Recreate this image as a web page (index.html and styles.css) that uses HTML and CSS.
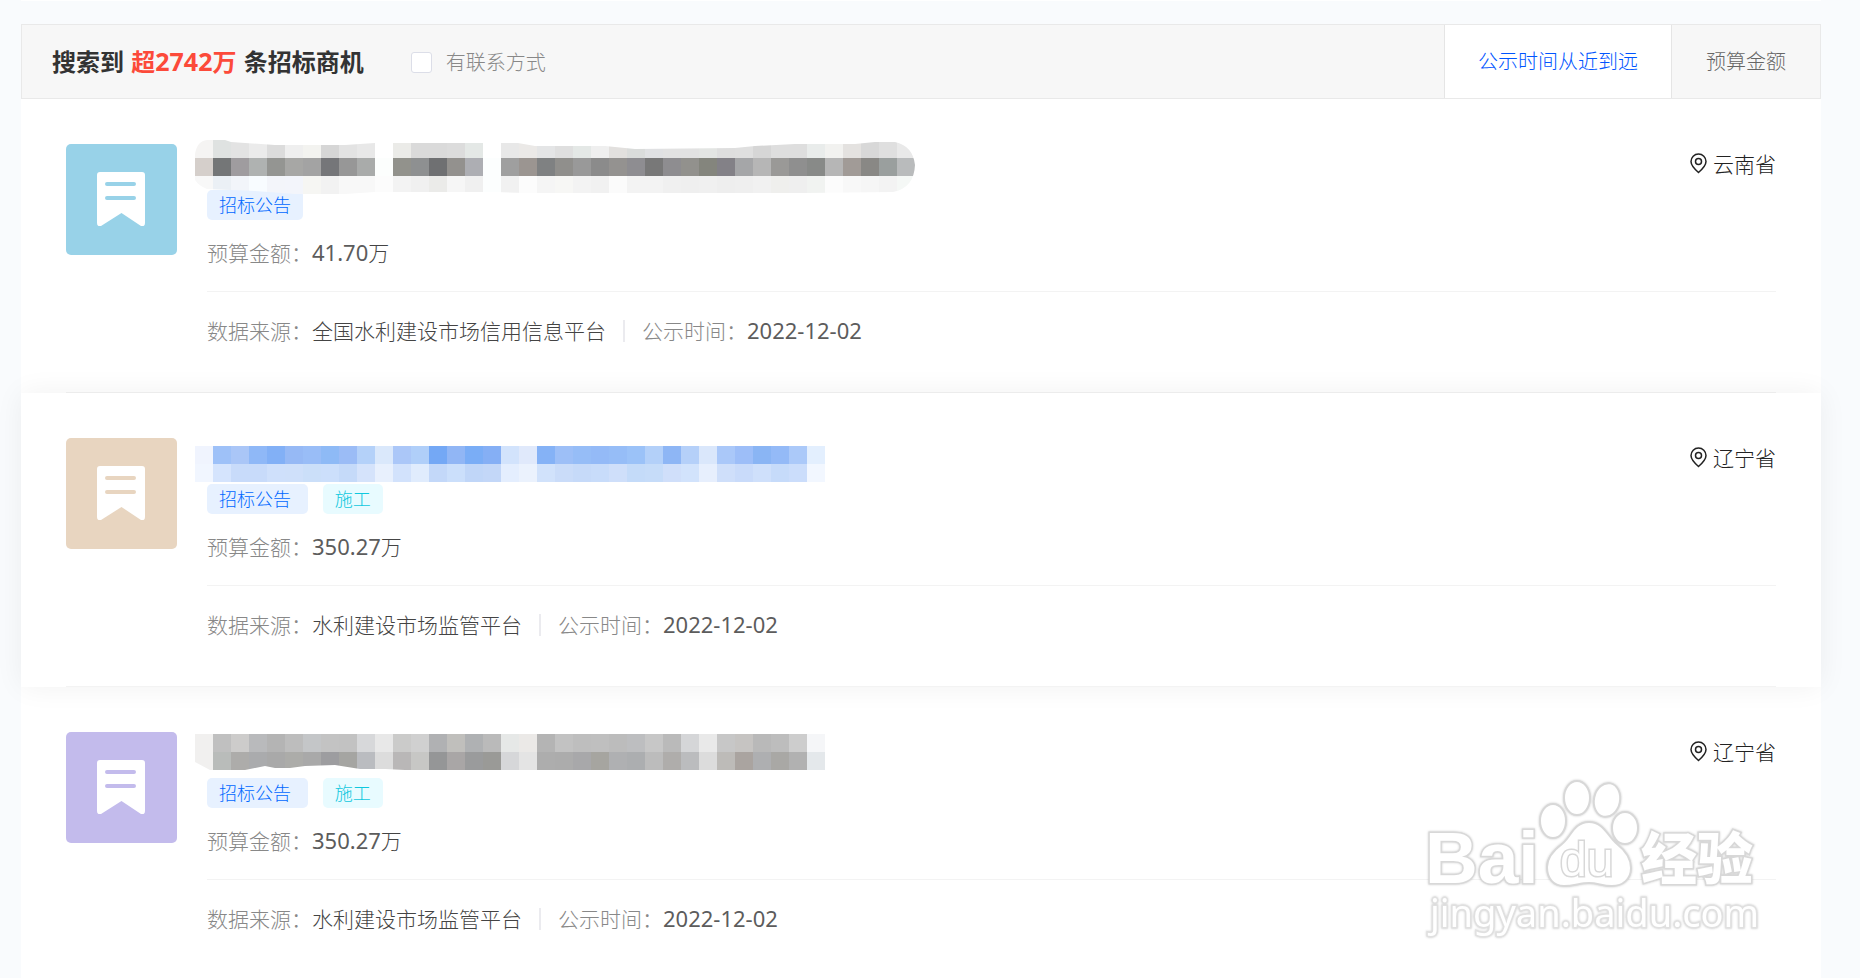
FILE: index.html
```html
<!DOCTYPE html>
<html lang="zh-CN">
<head>
	<meta charset="utf-8">
	<title>招标商机</title>
	<link rel="stylesheet" href="styles.css">
</head>
<body>
	<!-- shared icons -->
	<svg class="sprite" aria-hidden="true">
		<symbol id="icon-bookmark" viewBox="0 0 48 54">
			<path fill="#fff" d="M3 0h42q3 0 3 3v48q0 4-4 3L24.500 41 4 54q-4 1-4-3V3q0-3 3-3z"/>
			<path fill="none" stroke="currentColor" stroke-width="4" stroke-linecap="round" d="M10 12h27M10 26h27"/>
		</symbol>
		<symbol id="icon-pin" viewBox="0 0 18 21">
			<path fill="none" stroke="currentColor" stroke-width="1.500" d="M8.500 19.500C4.500 16 1 12.500 1 8.500a7.500 7.500 0 0 1 15 0c0 4-3.500 7.500-7.500 11z"/>
			<circle cx="8.500" cy="8.500" r="3" fill="none" stroke="currentColor" stroke-width="1.500"/>
		</symbol>
	</svg>

	<div class="container">
		<div class="toolbar">
			<h1 class="result-title">搜索到 <em>超<span class="count">2742</span>万</em> 条招标商机</h1>
			<label class="filter"><input type="checkbox" class="filter-box" name="contact">有联系方式</label>
			<div class="sort">
				<button type="button" class="sort-btn active">公示时间从近到远</button>
				<button type="button" class="sort-btn">预算金额</button>
			</div>
		</div>

		<div class="list">
			<div class="item">
				<div class="item-inner">
					<div class="thumb blue"><svg><use href="#icon-bookmark"/></svg></div>
					<div class="detail">
						<div class="title-row">
							<svg class="mosaic mosaic-1" id="mosaic-1"></svg>
							<span class="place"><svg><use href="#icon-pin"/></svg>云南省</span>
						</div>
						<div class="tags"><span class="tag">招标公告</span></div>
						<p class="budget"><span class="name">预算金额：</span><span class="num">41.70</span>万</p>
						<p class="source"><span><span class="name">数据来源：</span>全国水利建设市场信用信息平台</span><i class="sep"></i><span><span class="name">公示时间：</span><span class="num">2022-12-02</span></span></p>
					</div>
				</div>
			</div>

			<div class="item hover">
				<div class="item-inner">
					<div class="thumb sand"><svg><use href="#icon-bookmark"/></svg></div>
					<div class="detail">
						<div class="title-row">
							<svg class="mosaic mosaic-2" id="mosaic-2"></svg>
							<span class="place"><svg><use href="#icon-pin"/></svg>辽宁省</span>
						</div>
						<div class="tags"><span class="tag">招标公告 </span><span class="tag cyan">施工</span></div>
						<p class="budget"><span class="name">预算金额：</span><span class="num">350.27</span>万</p>
						<p class="source"><span><span class="name">数据来源：</span>水利建设市场监管平台</span><i class="sep"></i><span><span class="name">公示时间：</span><span class="num">2022-12-02</span></span></p>
					</div>
				</div>
			</div>

			<div class="item">
				<div class="item-inner">
					<div class="thumb purple"><svg><use href="#icon-bookmark"/></svg></div>
					<div class="detail">
						<div class="title-row">
							<svg class="mosaic mosaic-3" id="mosaic-3"></svg>
							<span class="place"><svg><use href="#icon-pin"/></svg>辽宁省</span>
						</div>
						<div class="tags"><span class="tag">招标公告 </span><span class="tag cyan">施工</span></div>
						<p class="budget"><span class="name">预算金额：</span><span class="num">350.27</span>万</p>
						<p class="source"><span><span class="name">数据来源：</span>水利建设市场监管平台</span><i class="sep"></i><span><span class="name">公示时间：</span><span class="num">2022-12-02</span></span></p>
					</div>
				</div>
			</div>
		</div>

		<svg class="watermark" viewBox="0 0 350 180">
			<text class="wm-bai" x="5" y="112">Bai</text>
			<ellipse cx="133" cy="50" rx="13" ry="17"/>
			<ellipse cx="157" cy="27" rx="13" ry="17"/>
			<ellipse cx="187" cy="29" rx="13" ry="17" transform="rotate(12 187 29)"/>
			<ellipse cx="205" cy="57" rx="13" ry="16"/>
			<path d="M169 51C184 51 188 66 197 73C206 80 211 87 211 97C211 108 203 115 192 115C182 115 178 112 169 112C160 112 154 115 144 115C133 115 127 107 127 96C127 86 134 79 142 73C151 66 154 51 169 51z"/>
			<text class="wm-du" x="140" y="105">du</text>
			<text class="wm-cn" x="221" y="108">经验</text>
			<text class="wm-url" x="10" y="156">jingyan.baidu.com</text>
		</svg>
	</div>

	<script src="mosaic.js"></script>
</body>
</html>
```
FILE: styles.css
```css
* {
	box-sizing: border-box;
}
body {
	margin: 0;
	overflow-x: hidden;
	background-color: #f9fbfd;
	color: #444;
	font-family: "Noto Sans", "Noto Sans CJK SC", sans-serif;
	font-size: 21px;
	font-weight: 300;
	line-height: 30px;
}
h1, p {
	margin: 0;
}
.sprite {
	display: none;
}
.container {
	position: relative;
	margin: 0 39px 0 21px;
	border-top: 1px solid #fff;
	padding-top: 23px;
}

/* toolbar */
.toolbar {
	display: flex;
	align-items: stretch;
	height: 75px;
	padding-left: 30px;
	background-color: #f7f7f7;
	border: 1px solid #e9e9e9;
}
.result-title {
	align-self: center;
	color: #333;
	font-size: 24px;
	font-weight: bold;
	line-height: 36px;
}
.result-title em {
	margin: 0 1px;
	color: #fc4a3a;
	font-style: normal;
}
.count {
	font-size: 25px;
}
.filter {
	display: flex;
	align-items: center;
	gap: 14px;
	margin-left: 47px;
	padding-top: 2px;
	color: #888;
	font-size: 20px;
}
.filter-box {
	appearance: none;
	width: 21px;
	height: 21px;
	margin: 0;
	background-color: #fff;
	border: 1px solid #dcdee8;
	border-radius: 3px;
}
.sort {
	display: flex;
	margin-left: auto;
}
.sort-btn {
	padding: 0 34px;
	background: none;
	border: 0;
	border-left: 1px solid #e5e5e5;
	color: #666;
	font: inherit;
	font-size: 20px;
	cursor: pointer;
}
.sort-btn.active {
	padding: 0 33px;
	background-color: #fff;
	color: #0055ff;
}

/* list */
.list {
	background-color: #fff;
}
.item {
	padding: 45px 45px 0;
}
.item.hover {
	position: relative;
	background-color: #fff;
	box-shadow: 0 0 27px rgba(0, 0, 0, 0.06);
}
.item-inner {
	display: flex;
	gap: 30px;
	padding-bottom: 46px;
	border-bottom: 1px solid #f3f3f3;
}
.thumb {
	width: 111px;
	height: 111px;
	padding: 28px 31px;
	border-radius: 5px;
}
.thumb svg {
	display: block;
	width: 48px;
	height: 54px;
}
.thumb.blue {
	background-color: #98d2e8;
	color: #98d2e8;
}
.thumb.sand {
	background-color: #e8d5c0;
	color: #e8d5c0;
}
.thumb.purple {
	background-color: #c3bbec;
	color: #c3bbec;
}
.detail {
	flex: 1;
}
.title-row {
	position: relative;
	display: flex;
	justify-content: flex-end;
	height: 46px;
	padding-top: 5px;
}
.place {
	display: flex;
	align-items: flex-start;
	gap: 5px;
	color: #222;
}
.place svg {
	width: 18px;
	height: 21px;
	margin-top: 4px;
}
.tags {
	display: flex;
	gap: 15px;
}
.tag {
	height: 30px;
	padding: 0 12px;
	background-color: #e7f1ff;
	border-radius: 5px;
	color: #0068ff;
	font-size: 18px;
	white-space: pre;
}
.tag.cyan {
	background-color: #e8fbff;
	color: #10c8de;
}
.budget {
	padding: 17px 0 23px;
	border-bottom: 1px solid #f3f3f3;
}
.source {
	display: flex;
	align-items: center;
	gap: 17px;
	padding-top: 23px;
}
.name {
	color: #888;
}
.num {
	color: #5c5c5c;
	font-size: 22px;
	font-weight: 400;
}
.sep {
	width: 2px;
	height: 22px;
	background-color: #ebebef;
}

/* pixelated titles, laid over the rows */
.mosaic {
	position: absolute;
	left: -12px;
	z-index: 1;
}
.mosaic-1 {
	top: -4px;
	clip-path: path("M0 14Q2 1 12 0L30 0L36 2L80 5L150 5L180 3L323 3L340 6L410 6L440 9L540 8L560 6L600 4L660 4L680 2L700 2Q718 6 720 25Q719 48 698 52L610 53L330 53L300 52L180 52L150 54L100 54L60 51L12 49Q4 46 0 40z");
}
.mosaic-2 {
	top: 8px;
}
.mosaic-3 {
	top: 2px;
	clip-path: path("M0 0H630V36H210L190 35L165 35L140 31L110 32L95 34L80 34L70 32L50 36L15 36L0 28z");
}

.watermark {
	position: absolute;
	right: 51px;
	top: 770px;
	z-index: 2;
	width: 350px;
	height: 180px;
	fill: #fff;
	stroke: #d8d8d8;
	stroke-width: 2;
	filter: drop-shadow(0 0 1px rgba(0, 0, 0, 0.2));
}
.watermark text {
	paint-order: stroke;
	stroke-width: 3;
}
.wm-bai {
	font: bold 73px "Liberation Sans", sans-serif;
}
.wm-du {
	font: 48px "Liberation Sans", sans-serif;
}
.wm-cn {
	font: 900 56px "Noto Sans CJK SC", sans-serif;
}
.wm-url {
	font: 38px "Noto Sans", sans-serif;
	stroke: #e0e0e0;
}
```
FILE: mosaic.js
```js
// Cell colours of each blurred title, row by row. "-" is an empty cell
var mosaics = {
	"mosaic-1": [
		"f5f4f3 dfe2e1 e3e3e3 ebebeb dcdcdc efefef f3f3f0 d6d6d6 e3e3e3 e8e8e8 - ebebe8 dadada dadada dcdcdc e4e8e6 - e8e8e8 ebe9e7 e4e5e6 dfdfdf e4e8e6 efefef e2e0de dadcdb e0e1e3 e2e2e2 e2e2e2 e3e5e3 dedede dfdfdf d6d6d6 dedede dedede e9eceb f2f2f0 e4e2e0 d8d8d8 dfdfdf e9e9e9",
		"d5cfcb 747677 9f9c9f afb2b1 949592 a7a7a5 a3a3a3 757679 979797 a9abaa fcfefd 92928c 8e9091 6f7072 93918e adaeb3 fcfefe 9f9f9f 9b9591 7f8182 908f8c 999999 8b8b8b 949290 8e8d91 787878 8e8d90 92918d 84857d 838187 a5a6a8 b6b6b6 9a9997 8f8f8f 888a88 b6b6b6 a19b97 898885 9a9f9e b9bbbc",
		"f8f8f8 ebf0f5 f2f5fa f8fcff f3f5fa f3f5fb f6f6f3 f2f2f2 f8f8f8 f8f8f8 fcfcfc f3f3f3 f0f0f0 ebebe9 f6f6f6 f0f0f0 fcfefe f1f1f1 fcfcfc f5f5f5 f7f7f5 f3f3f3 f1f1f1 fbfbfb f3f3f3 f3f3f3 f0f0f0 efefef f0f0f0 eeeeee efefef f1f1f1 efefed efefef f1f3f1 fcfcfc f8f8f8 f6f6f6 f3f3f3 f5f8f6"
	],
	"mosaic-2": [
		"f0f4fe 9ec1f8 aac6f7 8fb8f7 82b0f6 96b9f5 99bdf7 8ebaf6 9bbcf6 b4d1f9 dae8fb abc7f8 b0cff9 74a8f5 91b6f5 7aadf6 85aff5 d2e3fc e0e9fb 85b2f6 9dbff7 96bdf7 94baf7 96bdf7 9bc2f8 b3d0f9 8eb6f5 b5d0f9 dae7fb aac8f9 9dbef8 8ab5f4 94baf7 abc9f9 e3effe",
		"f1f6ff d5e4fd c8dbfa c8dbfa cfe0fb cfe0fa cbdff9 ccdffb c5daf9 d5e3fb e8f0fd d2e2fc e0ecfd c3d8f9 cbdffb c0d6f8 c3d7f8 e4eefe ebf2fd d1e2fb cadcf9 c6daf9 c8dcfa cfdffa c4dbf9 c6dcf9 d0dffa d2e3fc e7effd cfdffa c9dbfa cfe0fb c6dbfa cbddfb f2f7ff"
	],
	"mosaic-3": [
		"f1f0ef c0c0c0 cdcccb b9babc b4b4b4 bdbdbd c4c6c8 c3c3c3 c2c2c2 d7d8da e8e8e8 cbcbca d0d0d0 b0b1b3 c0bfbc afb1b3 bababa e6e8e7 ebe9e7 b4b4b4 c2c2c2 bebebe bfbfbf bcbcbc bdbec0 c7c7c7 bababa d5d6d8 e9e9e9 c7c7c7 c6c4c2 b9b9b9 bdbdbd cdcdcd f5f6f8",
		"f1f0ef b9bcba adacaa aaabad a9a9a9 acaca9 a9a9a9 9d9da0 a5a5a2 babcc0 dcdcdc b9b7b7 c7c7c5 959697 a9a6a6 9a9b9c 9a9a97 d6d7d9 e4e4e4 adadad acacac a8a8aa a6a5a0 afb0b2 acaeb0 bcbcbc afadab bbbcbe dcdcdc bdbbb8 aaa4a0 aeafb1 a9a8a5 b1b1b1 e4e8eb"
	]
};
var cell = 18;

// Function to fill one svg with its coloured cells
function drawMosaic(id, rows) {
	var svg = document.getElementById(id);
	svg.setAttribute("width", rows[0].split(" ").length * cell);
	svg.setAttribute("height", rows.length * cell);
	rows.forEach(function(row, y) {
		row.split(" ").forEach(function(color, x) {
			if (color === "-") return;
			var rect = document.createElementNS("http://www.w3.org/2000/svg", "rect");
			rect.setAttribute("x", x * cell);
			rect.setAttribute("y", y * cell);
			rect.setAttribute("width", cell);
			rect.setAttribute("height", cell);
			rect.setAttribute("fill", "#" + color);
			svg.appendChild(rect);
		});
	});
}

for (var id in mosaics) {
	drawMosaic(id, mosaics[id]);
}
```
